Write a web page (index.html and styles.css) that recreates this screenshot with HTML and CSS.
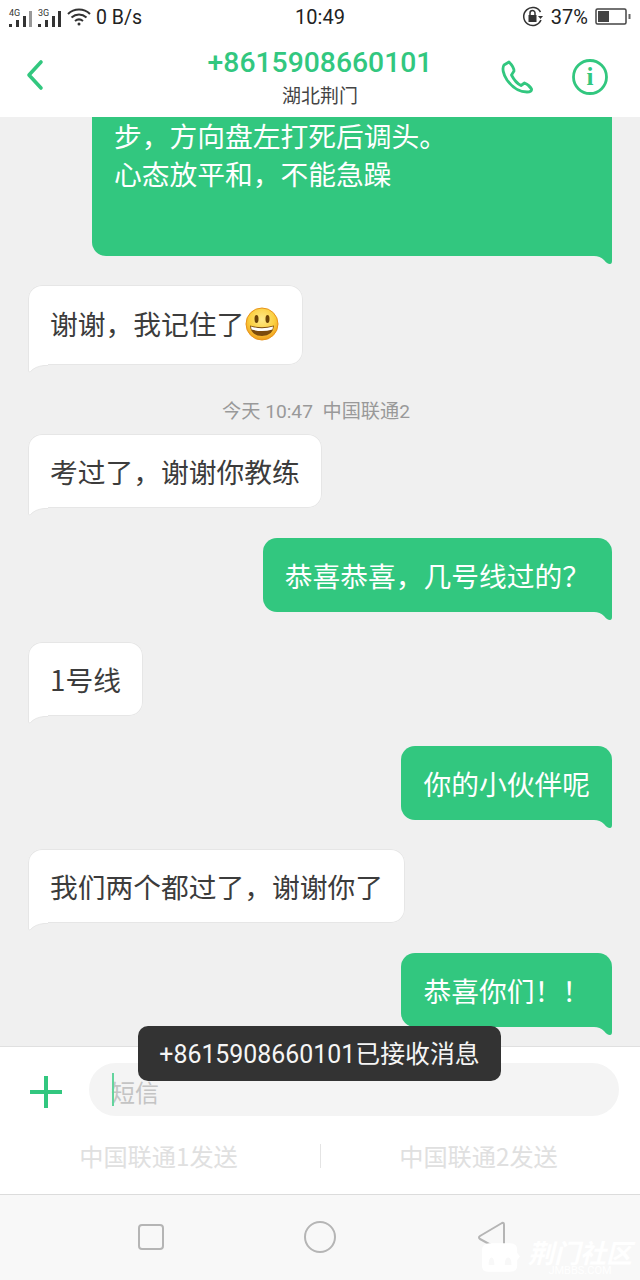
FILE: index.html
```html
<!DOCTYPE html>
<html lang="zh">
<head>
<meta charset="utf-8">
<title>短信</title>
<link rel="stylesheet" href="styles.css">
</head>
<body>
<div class="app">
  <div class="status">
    <div class="status-left">
      <span class="sim"><span class="net">4G</span><svg width="26" height="16" viewBox="0 0 26 16"><g fill="#333"><rect x="0" y="13" width="3" height="3"/><rect x="7" y="9" width="3" height="7"/><rect x="14" y="5" width="3" height="11"/></g><rect x="20" y="0" width="3" height="16" fill="#999"/></svg></span>
      <span class="sim"><span class="net">3G</span><svg width="26" height="16" viewBox="0 0 26 16"><g fill="#333"><rect x="0" y="13" width="3" height="3"/><rect x="7" y="9" width="3" height="7"/><rect x="14" y="5" width="3" height="11"/><rect x="20" y="0" width="3" height="16"/></g></svg></span>
      <svg class="wifi" width="24" height="18" viewBox="0 0 24 18" fill="none" stroke="#333" stroke-width="2"><path d="M1 6C7 0 17 0 23 6"/><path d="M4.500 9.500C9 5.500 15 5.500 19.500 9.500"/><path d="M8 13C10.500 11 13.500 11 16 13"/><circle cx="12" cy="16" r="1.500" fill="#333" stroke="none"/></svg>
      <span class="speed">0 B/s</span>
    </div>
    <div class="clock">10:49</div>
    <div class="status-right">
      <svg width="22" height="22" viewBox="0 0 22 22" fill="none" stroke="#333" stroke-width="1.500"><path d="M19 14A9 9 0 1 1 18.500 6"/><path d="M17 10l2.500 3 2.500-3z" fill="#333" stroke="none" transform="translate(-1 0)"/><rect x="6.500" y="9" width="8" height="7" fill="#333" stroke="none"/><path d="M8 9V7a2.500 2.500 0 0 1 5 0v2"/></svg>
      <span class="pct">37%</span>
      <svg width="36" height="18" viewBox="0 0 36 18"><rect x="1" y="1" width="30" height="15" rx="1.500" fill="none" stroke="#444" stroke-width="1.500"/><rect x="3" y="3" width="11" height="11" fill="#444"/><rect x="33.500" y="6" width="2" height="5" fill="#666"/></svg>
    </div>
  </div>

  <header class="head">
    <svg class="back" width="20" height="32" viewBox="0 0 20 32" fill="none" stroke="#32c77f" stroke-width="3.600" stroke-linecap="round" stroke-linejoin="round"><path d="M15 3L3 16L15 29"/></svg>
    <div class="title">
      <div class="number">+8615908660101</div>
      <div class="place">湖北荆门</div>
    </div>
    <div class="actions">
      <svg width="32" height="34" viewBox="0 0 32 34" fill="none" stroke="#32c77f" stroke-width="2.800" stroke-linejoin="round" stroke-linecap="round"><path d="M8 2L3 5C1 8 2 14 6 20C11 27 18 32 26 32C29 32 31 31 30.500 29C29 26 26 24 23.500 23L20 25.500C17 24 13 20 10.500 15L13 11C13 8 11 5 8 2Z"/></svg>
      <svg width="36" height="36" viewBox="0 0 36 36"><circle cx="18" cy="18" r="16.500" fill="none" stroke="#32c77f" stroke-width="2.800"/><text class="info-i" x="18" y="26" text-anchor="middle">i</text></svg>
    </div>
  </header>

  <main class="thread">
    <div class="row out">
      <div class="bubble tall">步&#xFF0C;方向盘左打死后调头&#x3002;<br>心态放平和&#xFF0C;不能急躁<svg class="tail" width="18" height="12" viewBox="0 0 18 12"><path d="M0 4Q6 4 10 8Q13 12 16 12Q18 12 18 9V0H0Z"/></svg></div>
    </div>
    <div class="row in">
      <div class="bubble emoji-b">谢谢&#xFF0C;我记住了<svg class="smile" width="34" height="34" viewBox="0 0 34 34"><defs><radialGradient id="face" cx="50%" cy="35%" r="65%"><stop offset="0" stop-color="#fde98a"/><stop offset="0.6" stop-color="#fbcf3f"/><stop offset="1" stop-color="#ee9d1b"/></radialGradient></defs><circle cx="17" cy="17" r="16" fill="url(#face)" stroke="#e8941a" stroke-width="1"/><ellipse cx="11.500" cy="12" rx="2" ry="4" fill="#6b4207"/><ellipse cx="22.500" cy="12" rx="2" ry="4" fill="#6b4207"/><path d="M5 18.500Q17 22 29 18.500Q28 29 17 29Q6 29 5 18.500Z" fill="#7b4a0c"/><path d="M6 19.500Q17 23 28 19.500L27.500 22.500Q17 25.500 6.500 22.500Z" fill="#fff"/></svg><svg class="tail" width="20" height="12" viewBox="0 0 20 12"><path class="tail-fill" d="M0 0V10Q0 12 2 11Q7 5.500 16 4.500H20V0Z"/><path class="tail-line" d="M.5 0V10Q.5 12 2.500 10.500Q7 5.500 16 4.500H20"/></svg></div>
    </div>
    <div class="stamp">今天 10:47&nbsp;&nbsp;中国联通2</div>
    <div class="row in stamped">
      <div class="bubble">考过了&#xFF0C;谢谢你教练<svg class="tail" width="20" height="12" viewBox="0 0 20 12"><path class="tail-fill" d="M0 0V10Q0 12 2 11Q7 5.500 16 4.500H20V0Z"/><path class="tail-line" d="M.5 0V10Q.5 12 2.500 10.500Q7 5.500 16 4.500H20"/></svg></div>
    </div>
    <div class="row out">
      <div class="bubble">恭喜恭喜&#xFF0C;几号线过的&#xFF1F;<svg class="tail" width="18" height="12" viewBox="0 0 18 12"><path d="M0 4Q6 4 10 8Q13 12 16 12Q18 12 18 9V0H0Z"/></svg></div>
    </div>
    <div class="row in">
      <div class="bubble">1号线<svg class="tail" width="20" height="12" viewBox="0 0 20 12"><path class="tail-fill" d="M0 0V10Q0 12 2 11Q7 5.500 16 4.500H20V0Z"/><path class="tail-line" d="M.5 0V10Q.5 12 2.500 10.500Q7 5.500 16 4.500H20"/></svg></div>
    </div>
    <div class="row out">
      <div class="bubble">你的小伙伴呢<svg class="tail" width="18" height="12" viewBox="0 0 18 12"><path d="M0 4Q6 4 10 8Q13 12 16 12Q18 12 18 9V0H0Z"/></svg></div>
    </div>
    <div class="row in">
      <div class="bubble">我们两个都过了&#xFF0C;谢谢你了<svg class="tail" width="20" height="12" viewBox="0 0 20 12"><path class="tail-fill" d="M0 0V10Q0 12 2 11Q7 5.500 16 4.500H20V0Z"/><path class="tail-line" d="M.5 0V10Q.5 12 2.500 10.500Q7 5.500 16 4.500H20"/></svg></div>
    </div>
    <div class="row out last">
      <div class="bubble">恭喜你们&#xFF01;&#xFF01;<svg class="tail" width="18" height="12" viewBox="0 0 18 12"><path d="M0 4Q6 4 10 8Q13 12 16 12Q18 12 18 9V0H0Z"/></svg></div>
    </div>
  </main>

  <section class="composer">
    <div class="input-row">
      <svg class="plus" width="34" height="34" viewBox="0 0 34 34" fill="#32c77f"><rect x="15" y="1" width="4" height="32"/><rect x="1" y="15" width="32" height="4"/></svg>
      <div class="field"><span class="caret"></span>短信</div>
    </div>
    <div class="send-row">
      <div class="send">中国联通1发送</div>
      <div class="send">中国联通2发送</div>
    </div>
  </section>

  <nav class="nav">
    <svg width="28" height="28" viewBox="0 0 28 28" fill="none" stroke="#b5b5b5" stroke-width="2"><rect x="2" y="2" width="24" height="24" rx="3"/></svg>
    <svg width="34" height="34" viewBox="0 0 34 34" fill="none" stroke="#b5b5b5" stroke-width="2"><circle cx="17" cy="17" r="15"/></svg>
    <svg width="30" height="32" viewBox="0 0 30 32" fill="none" stroke="#b5b5b5" stroke-width="2" stroke-linejoin="round"><path d="M3 15L25 2Q27 1 27 4V28Q27 31 25 30L3 18Q1 16.500 3 15Z"/></svg>
  </nav>

  <div class="toast">+8615908660101已接收消息</div>

  <div class="mark">
    <svg class="mark-icon" width="38" height="29" viewBox="0 0 40 30" fill="#fff"><path d="M8 0H30Q37 0 37 7V10L40 14L37 18V24Q37 30 30 30H6Q0 30 0 24V8Q0 0 8 0ZM7 23H13Q13 15 10 15Q7 15 7 23ZM24 23H31Q31 15 27.500 15Q24 15 24 23Z" fill-rule="evenodd"/></svg>
    <div class="mark-text">
      <div class="mark-cn">荆门社区</div>
      <div class="mark-en">JMBBS.COM</div>
    </div>
  </div>
</div>
</body>
</html>
```
FILE: styles.css
```css
* { box-sizing: border-box; }
html, body { margin: 0; padding: 0; }
body {
  font-family: "Roboto", "Noto Sans CJK SC", sans-serif;
  background: #f0f0f0;
}
.app {
  position: relative;
  width: 640px;
  height: 1280px;
  display: flex;
  flex-direction: column;
  overflow: hidden;
}

/* status bar */
.status {
  height: 36px;
  flex: none;
  background: #fff;
  display: grid;
  grid-template-columns: 1fr auto 1fr;
  align-items: center;
  padding: 0 9px 2px 9px;
  color: #222;
  font-size: 19.500px;
}
.status-left { display: flex; align-items: center; gap: 2px; }
.status-right { display: flex; align-items: center; justify-content: flex-end; gap: 7px; }
.clock { font-size: 20px; }
.sim { position: relative; width: 27px; height: 24px; display: flex; align-items: flex-start; padding-top: 6px; }
.net {
  position: absolute;
  left: 0;
  top: 3px;
  font-size: 9px;
  line-height: 11px;
  color: #333;
  background: #fff;
  padding-right: 1px;
}
.speed { margin-left: 3px; }
.pct { font-size: 20px; }

/* header */
.head {
  height: 81px;
  flex: none;
  background: #fff;
  display: grid;
  grid-template-columns: 1fr auto 1fr;
  align-items: center;
  padding: 0 29px;
}
.back { margin: -3px 0 0 -3px; }
.title { text-align: center; }
.number {
  color: #32c77f;
  font-size: 28.300px;
  font-weight: 500;
  line-height: 36px;
  margin-top: 2px;
}
.place {
  color: #444;
  font-size: 19px;
  line-height: 28px;
  margin-top: 2px;
}
.actions { display: flex; justify-content: flex-end; align-items: center; gap: 39px; margin-right: 3px; }
.info-i { fill: #32c77f; font-family: "Liberation Serif", serif; font-size: 25px; font-weight: 700; }

/* thread */
.thread {
  flex: 1;
  min-height: 0;
  overflow: hidden;
  background: #f0f0f0;
  display: flex;
  flex-direction: column;
  justify-content: flex-end;
  padding: 0 28px 19px;
}
.row { display: flex; margin-top: 29.750px; flex: none; }
.row.stamped { margin-top: 9px; }
.row.out { justify-content: flex-end; }
.row.in { justify-content: flex-start; }
.bubble {
  position: relative;
  font-family: "Noto Sans CJK SC", sans-serif;
  font-size: 27.750px;
  line-height: 38px;
  padding: 18px 22px;
  border-radius: 14px;
}
.out .bubble { background: #32c77f; color: #fff; border-bottom-right-radius: 0; }
.in .bubble { background: #fff; color: #3c3c3c; box-shadow: inset 0 0 0 1px #e6e6e6; border-bottom-left-radius: 0; }
.bubble.tall { width: 520px; height: 160px; padding: 20px 22px 64px; }
.bubble.emoji-b { height: 80px; padding-top: 19px; padding-right: 24px; }
.smile { vertical-align: -6px; margin-left: 1px; }
.tail { position: absolute; bottom: -8px; }
.out .tail { right: 0; fill: #32c77f; }
.in .tail { left: 0; }
.tail-fill { fill: #fff; }
.tail-line { fill: none; stroke: #e6e6e6; stroke-width: 1; }
.stamp {
  flex: none;
  text-align: center;
  color: #999;
  font-size: 19.200px;
  line-height: 26px;
  margin-top: 34px;
  padding-right: 8px;
}

/* composer */
.composer {
  height: 149px;
  flex: none;
  background: #fff;
  border-top: 1px solid #e0e0e0;
  border-bottom: 1px solid #dcdcdc;
}
.input-row {
  display: flex;
  align-items: center;
  gap: 26px;
  padding: 16px 21px 0 29px;
}
.plus { margin-top: 4px; }
.field {
  flex: 1;
  height: 53px;
  border-radius: 27px;
  background: #f4f4f4;
  color: #c4c4c4;
  font-family: "Noto Sans CJK SC", sans-serif;
  font-size: 24px;
  display: flex;
  align-items: center;
  padding: 3px 0 0 22px;
  position: relative;
}
.caret { position: absolute; left: 23px; top: 10px; width: 2px; height: 33px; background: #63d49d; }
.send-row { display: grid; grid-template-columns: 1fr 1fr; margin-top: 19px; }
.send {
  text-align: center;
  color: #e0e0e0;
  font-family: "Noto Sans CJK SC", sans-serif;
  font-size: 24.200px;
  line-height: 42px;
  padding-right: 3px;
}
.send + .send { position: relative; }
.send + .send::before {
  content: "";
  position: absolute;
  left: 0;
  top: 9px;
  width: 1px;
  height: 24px;
  background: #e4e4e4;
}

/* navigation */
.nav {
  height: 85px;
  flex: none;
  background: #f8f8f8;
  display: flex;
  align-items: center;
  padding-left: 137px;
  padding-bottom: 1px;
}
.nav svg:nth-child(2) { margin-left: 138px; }
.nav svg:nth-child(3) { margin-left: 140px; }

/* overlays */
.toast {
  position: absolute;
  left: 138px;
  top: 1026px;
  width: 363px;
  height: 55px;
  padding-top: 2px;
  background: #333;
  border-radius: 10px;
  color: #f5f5f5;
  font-size: 24.900px;
  line-height: 53px;
  text-align: center;
}
.mark {
  position: absolute;
  left: 482px;
  top: 1240px;
  display: flex;
  gap: 7px;
  color: #fff;
  align-items: flex-start;
}
.mark-icon { margin-top: 3px; }
.mark-text { width: 106px; text-align: center; white-space: nowrap; }
.mark-cn {
  font-family: "Noto Sans CJK SC", sans-serif;
  font-size: 26px;
  font-weight: 700;
  line-height: 24px;
  font-style: italic;
}
.mark-en {
  font-size: 11px;
  line-height: 13px;
}
```
